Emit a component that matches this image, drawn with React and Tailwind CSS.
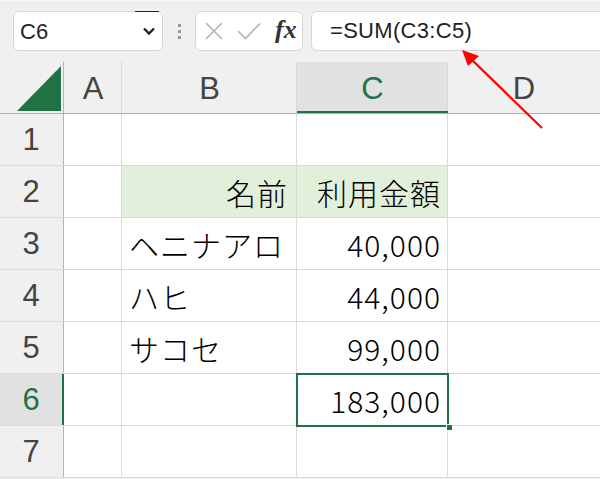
import React from "react";

const GREEN = "#217346";

function ColHeader({ w, label, active, last }) {
  return (
    <div
      className={`relative h-full flex items-center justify-center ${last ? "flex-1" : ""} ${active ? "bg-[#e1e1e1] text-[#217346]" : "text-[#444]"}`}
      style={w ? { width: w } : undefined}
    >
      <span className="text-[31px] leading-none font-['Liberation_Sans',sans-serif] translate-y-[1px]">{label}</span>
      {!last && <div className="absolute right-0 top-0 bottom-0 w-px bg-[#d9d9d9]" />}
      {active && <div className="absolute left-0 right-0 bottom-0 h-[2px] bg-[#217346]" />}
    </div>
  );
}

function Row({ n, active, b, c, green, bAlign = "left" }) {
  return (
    <div className="flex h-[52px]">
      <div
        className={`relative w-[64px] h-full flex items-center justify-center border-b border-[#dcdcdc] ${active ? "bg-[#e1e1e1] text-[#217346]" : "bg-[#f0f0f0] text-[#444]"}`}
      >
        <span className="text-[31px] leading-none font-['Liberation_Sans',sans-serif] -translate-x-[1px]">{n}</span>
        <div className={`absolute right-0 top-0 bottom-0 ${active ? "w-[2px] bg-[#217346]" : "w-px bg-[#b5b5b5]"}`} />
      </div>
      <div className="w-[58px] h-full bg-white border-r border-b border-[#dadada]" />
      <div
        className={`w-[175px] h-full border-r border-b border-[#dadada] flex items-center pl-[7px] pr-[8px] ${green ? "bg-[#e2efda]" : "bg-white"} ${bAlign === "right" ? "justify-end" : "justify-start"}`}
      >
        <span className="text-[30px] leading-none font-light text-black font-['Noto_Sans_CJK_JP',sans-serif] tracking-[1px]">{b}</span>
      </div>
      <div
        className={`w-[151px] h-full border-r border-b border-[#dadada] flex items-center justify-end px-[6px] ${green ? "bg-[#e2efda]" : "bg-white"}`}
      >
        <span className="text-[30px] leading-none font-light text-black font-['Noto_Sans_CJK_JP',sans-serif] tracking-[1px]">{c}</span>
      </div>
      <div className="flex-1 h-full bg-white border-b border-[#dadada]" />
    </div>
  );
}

export default function App() {
  return (
    <div className="relative w-[600px] h-[479px] overflow-hidden bg-[#f0f0f0] font-['Liberation_Sans',sans-serif]">
      {/* top strip */}
      <div className="h-[3px] bg-[#f7f7f7] border-b border-[#e6e6e6]" />
      {/* toolbar */}
      <div className="flex items-start pt-[8px] h-[48px]">
        <div className="relative ml-[13px] w-[150px] h-[40px] bg-white border border-[#d6d6d6] rounded-[6px] flex items-center pl-[6px] pr-[6px]">
          <span className="text-[22px] leading-none text-[#222] translate-y-[1px]">C6</span>
          <div className="absolute top-[-1px] right-[3px] w-[24px] h-[1px] bg-[#222]" />
          <svg className="ml-auto" width="14" height="10" viewBox="0 0 14 10">
            <path d="M2 2.5 L7 7.5 L12 2.5" fill="none" stroke="#222" strokeWidth="2.4" />
          </svg>
        </div>
        <div className="w-[32px] h-[40px] flex flex-col items-center justify-center gap-[3px]">
          <div className="w-[3px] h-[3px] bg-[#9a9a9a]" />
          <div className="w-[3px] h-[3px] bg-[#9a9a9a]" />
          <div className="w-[3px] h-[3px] bg-[#9a9a9a]" />
        </div>
        <div className="w-[108px] h-[40px] bg-white border border-[#d6d6d6] rounded-[6px] flex items-center pl-[9px]">
          <svg width="18" height="18" viewBox="0 0 18 18">
            <path d="M1 1 L17 17 M17 1 L1 17" stroke="#b3b3b3" strokeWidth="1.6" fill="none" />
          </svg>
          <svg className="ml-[14px]" width="24" height="18" viewBox="0 0 24 18">
            <path d="M1 9 L8.5 16.5 L23 1.5" stroke="#b3b3b3" strokeWidth="1.6" fill="none" />
          </svg>
          <span className="ml-[14px] text-[26px] leading-none italic font-bold text-[#333] font-['Liberation_Serif',serif] -translate-y-[1px]">fx</span>
        </div>
        <div className="ml-[8px] flex-1 mr-[-12px] h-[40px] bg-white border border-[#d6d6d6] rounded-[6px] flex items-center pl-[18px]">
          <span className="text-[22px] leading-none text-[#222] tracking-[0.3px]">=SUM(C3:C5)</span>
        </div>
      </div>
      {/* column header */}
      <div className="mt-[11px] flex h-[52px] border-b border-[#b0b0b0]">
        <div className="relative w-[64px] h-full border-r border-[#b5b5b5]">
          <svg className="absolute left-[17px] top-[4px]" width="44" height="45" viewBox="0 0 44 45">
            <polygon points="44,0 44,45 0,45" fill={GREEN} />
          </svg>
        </div>
        <ColHeader w={58} label="A" />
        <ColHeader w={175} label="B" />
        <ColHeader w={151} label="C" active />
        <ColHeader label="D" last />
      </div>
      {/* rows */}
      <Row n="1" />
      <Row n="2" green b="名前" bAlign="right" c="利用金額" />
      <Row n="3" b="ヘニナアロ" c="40,000" />
      <Row n="4" b="ハヒ" c="44,000" />
      <Row n="5" b="サコセ" c="99,000" />
      <Row n="6" active c="183,000" />
      <Row n="7" />

      {/* selection */}
      <div className="absolute left-[296px] top-[373px] w-[153px] h-[54px] border-2 border-[#217346] pointer-events-none" />
      <div className="absolute left-[446px] top-[424px] w-[7px] h-[7px] bg-[#217346] border border-white" />

      {/* red arrow */}
      <svg className="absolute left-0 top-0 pointer-events-none" width="600" height="479" viewBox="0 0 600 479">
        <line x1="542" y1="128" x2="470" y2="58" stroke="#ff0000" strokeWidth="2.2" />
        <polygon points="462,50 479,56 468,66" fill="#ff0000" />
      </svg>
    </div>
  );
}
